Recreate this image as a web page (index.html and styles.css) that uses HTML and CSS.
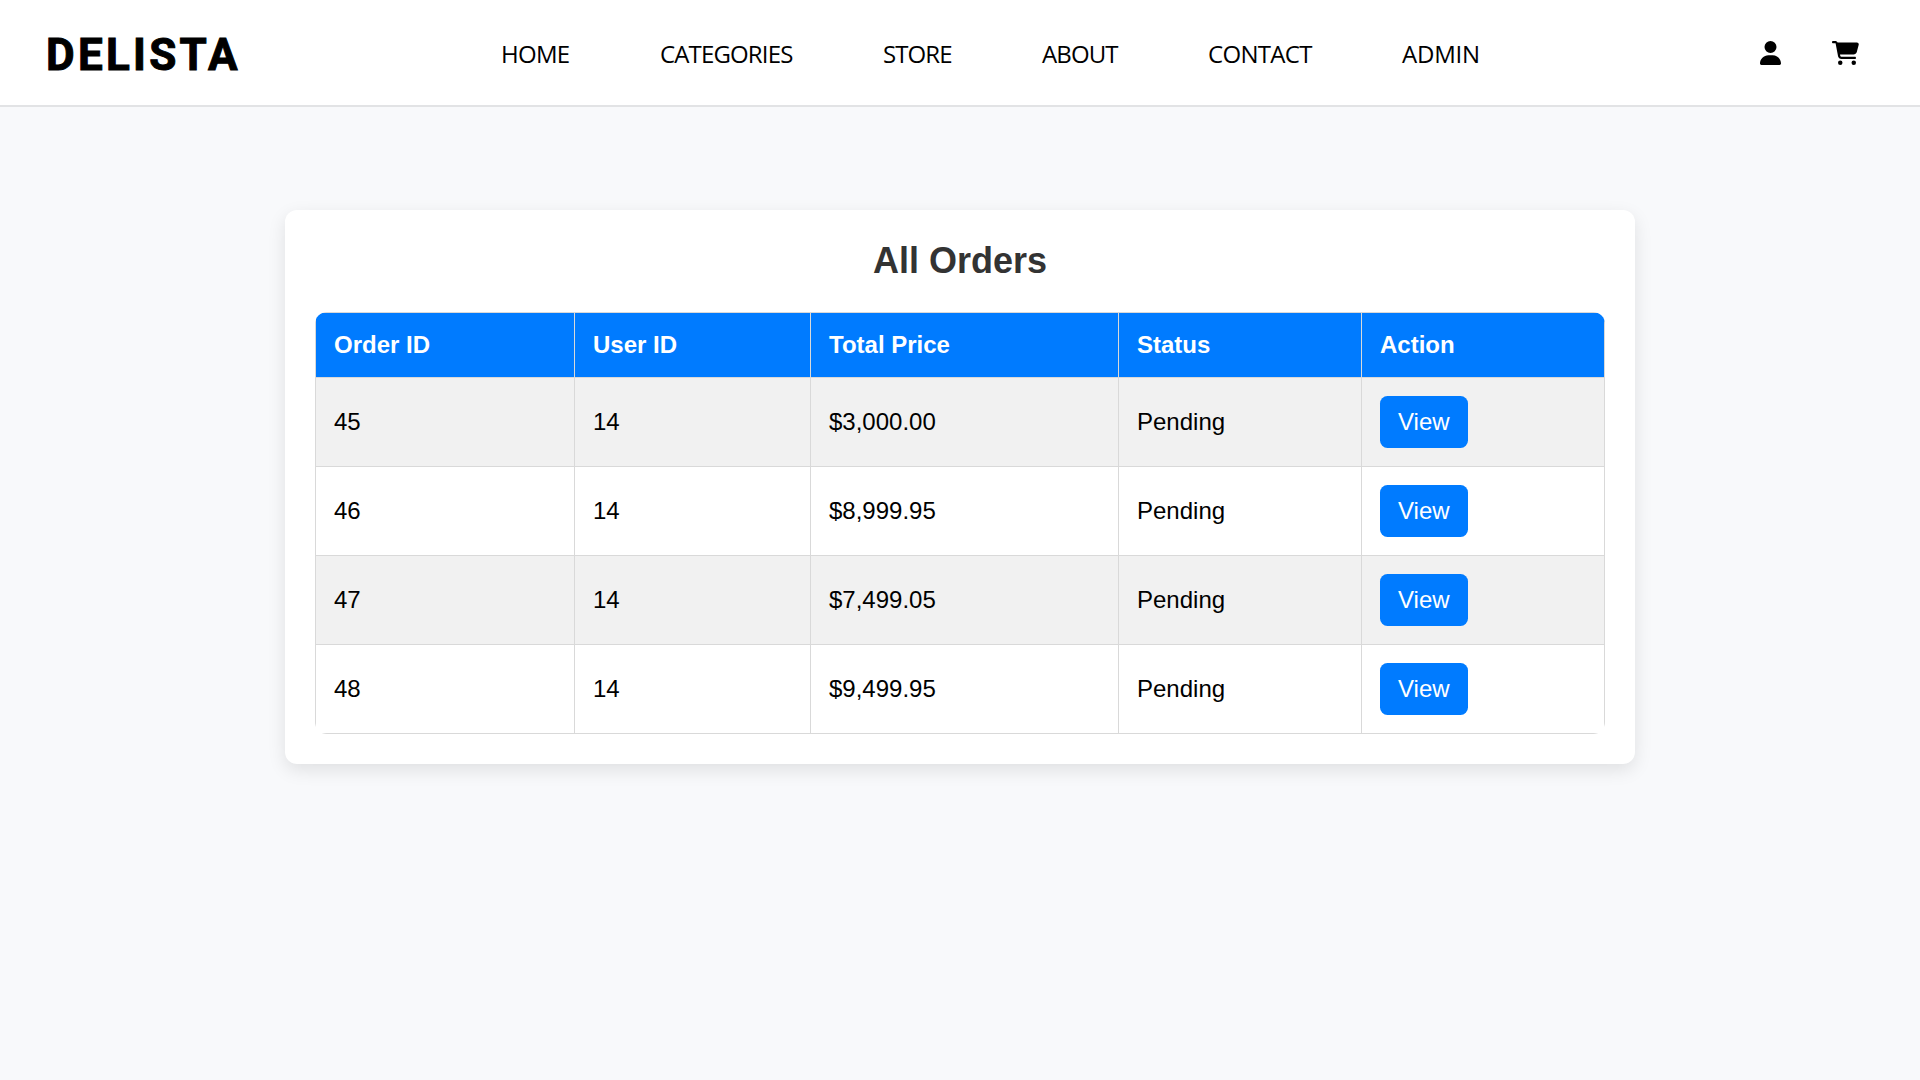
FILE: index.html
```html
<!DOCTYPE html>
<html lang="en">
<head>
<meta charset="utf-8">
<title>Delista - All Orders</title>
<link rel="stylesheet" href="styles.css">
</head>
<body>
<header class="navbar">
  <a class="logo">DELISTA</a>
  <nav class="links">
    <a class="link home">HOME</a>
    <a class="link categories">CATEGORIES</a>
    <a class="link store">STORE</a>
    <a class="link about">ABOUT</a>
    <a class="link contact">CONTACT</a>
    <a class="link admin">ADMIN</a>
  </nav>
  <div class="icons">
    <svg class="icon-user" viewBox="0 0 448 512"><path d="M224 256A128 128 0 1 0 224 0a128 128 0 1 0 0 256zm-45.7 48C79.8 304 0 383.8 0 482.3C0 498.7 13.3 512 29.7 512H418.3c16.4 0 29.7-13.3 29.7-29.7C448 383.8 368.2 304 269.7 304H178.3z"/></svg>
    <svg class="icon-cart" viewBox="0 0 576 512"><path d="M0 24C0 10.7 10.7 0 24 0H69.5c22 0 41.5 12.8 50.6 32h411c26.3 0 45.5 25 38.6 50.4l-41 152.3c-8.5 31.4-37 53.3-69.5 53.3H170.7l5.4 28.5c2.2 11.3 12.1 19.5 23.6 19.5H488c13.3 0 24 10.7 24 24s-10.7 24-24 24H199.7c-34.6 0-64.3-24.6-70.7-58.5L77.4 54.5c-.7-3.8-4-6.5-7.9-6.5H24C10.7 48 0 37.3 0 24zM128 464a48 48 0 1 1 96 0 48 48 0 1 1-96 0zm336-48a48 48 0 1 1 0 96 48 48 0 1 1 0-96z"/></svg>
  </div>
</header>
<main class="card">
  <h1 class="title">All Orders</h1>
  <table class="orders">
    <colgroup><col class="c-order"><col class="c-user"><col class="c-total"><col class="c-status"><col class="c-action"></colgroup>
    <thead>
      <tr><th>Order ID</th><th>User ID</th><th>Total Price</th><th>Status</th><th>Action</th></tr>
    </thead>
    <tbody>
      <tr><td>45</td><td>14</td><td>$3,000.00</td><td>Pending</td><td><a class="view">View</a></td></tr>
      <tr><td>46</td><td>14</td><td>$8,999.95</td><td>Pending</td><td><a class="view">View</a></td></tr>
      <tr><td>47</td><td>14</td><td>$7,499.05</td><td>Pending</td><td><a class="view">View</a></td></tr>
      <tr><td>48</td><td>14</td><td>$9,499.95</td><td>Pending</td><td><a class="view">View</a></td></tr>
    </tbody>
  </table>
</main>
</body>
</html>
```
FILE: styles.css
```css
* { box-sizing: border-box; }
body {
  margin: 0;
  min-height: 1080px;
  background: #f8f9fb;
  color: #000;
  font: 24px/28px "Liberation Sans", Arial, sans-serif;
}
.navbar {
  display: flex;
  align-items: center;
  height: 107px;
  padding: 0 61px 0 45px;
  background: #fff;
  border-bottom: 2px solid #e2e3e5;
}
.logo {
  width: 456px;
  padding: 4px 0 0 1px;
  font: 700 44px/54px Roboto, sans-serif;
  letter-spacing: 3.3px;
  -webkit-text-stroke: 1px #000;
}
.links {
  display: flex;
  gap: 90px;
  padding-top: 2px;
  font: 24px/32px "Open Sans", "Noto Sans", sans-serif;
  letter-spacing: -0.7px;
}
.link { white-space: nowrap; }
.home { width: 69px; }
.categories { width: 133px; letter-spacing: -0.85px; }
.store { width: 69px; letter-spacing: -0.9px; }
.about { width: 76px; letter-spacing: -0.9px; }
.contact { width: 104px; }
.admin { width: 78px; letter-spacing: -0.2px; }
.icons {
  display: flex;
  gap: 51.5px;
  margin-left: auto;
}
.icon-user { width: 21px; height: 24px; }
.icon-cart { width: 27px; height: 24px; }
.card {
  width: 1350px;
  height: 554px;
  margin: 103px auto 0;
  padding: 30px;
  background: #fff;
  border-radius: 12px;
  box-shadow: 0 6px 18px rgba(0, 0, 0, 0.1);
}
.title {
  margin: 0 0 30px;
  color: #333;
  font-size: 36px;
  line-height: 42px;
  text-align: center;
}
.orders {
  width: 1290px;
  table-layout: fixed;
  border-collapse: collapse;
  border-radius: 12px;
  overflow: hidden;
}
.c-order { width: 259px; }
.c-user { width: 236px; }
.c-total { width: 308px; }
.c-status { width: 243px; }
.c-action { width: 243px; }
.orders th,
.orders td {
  padding: 18px;
  border: 1px solid #d9d9d9;
  text-align: left;
}
.orders th {
  background: #007bff;
  color: #fff;
}
.orders tbody tr:nth-child(odd) { background: #f1f1f1; }
.view {
  display: block;
  width: 88px;
  padding: 12px 18px;
  border-radius: 7.5px;
  background: #007bff;
  color: #fff;
}
```
